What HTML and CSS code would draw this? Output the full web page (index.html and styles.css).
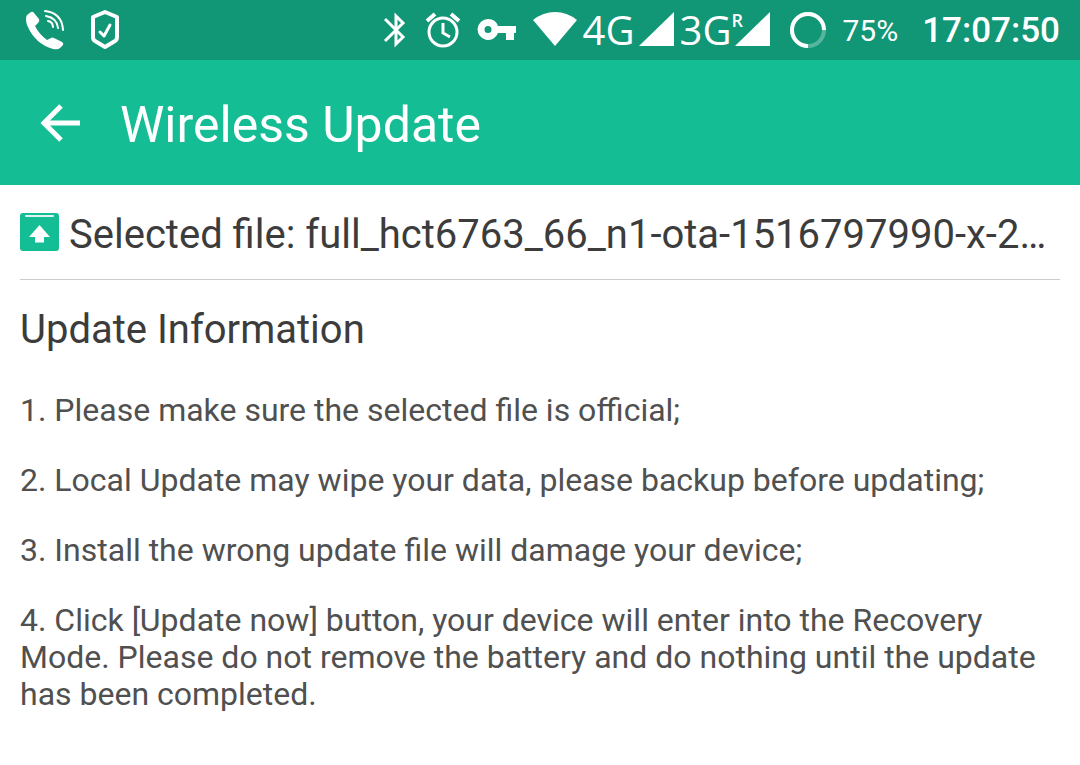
FILE: index.html
```html
<!DOCTYPE html>
<html lang="en">
  <head>
    <meta charset="UTF-8" />
    <meta name="viewport" content="width=device-width, initial-scale=1" />
    <title>Wireless Update</title>
    <link rel="stylesheet" href="styles.css" />
  </head>
  <body>
    <div class="status-bar">
      <div class="status-left">
        <svg width="40" height="42" viewBox="0 0 40 42">
          <path
            fill="#fff"
            d="M2 6 L6 3 Q8 2 9 4 L14 10 Q15 12 13 14 L10 17 Q14 25 22 31 L26 29 Q27 28 29 29 L37 33 Q39 34 38 36 L35 39 Q33 41 28 40 Q10 35 2 16 Q0 9 2 6z"
          />
          <path
            fill="none"
            stroke="#fff"
            stroke-width="2"
            stroke-linecap="round"
            d="M20 2 Q37 4 38 21 M21 7 Q32 9 33 19 M23 12 Q28 13 28 18"
          />
        </svg>
        <svg width="30" height="42" viewBox="0 0 30 42">
          <path
            fill="none"
            stroke="#fff"
            stroke-width="4"
            stroke-linejoin="round"
            d="M15 3 L27 8 V28 Q27 31 25 32 L15 38 L5 32 Q3 31 3 28 V8z"
          />
          <path
            fill="none"
            stroke="#fff"
            stroke-width="3"
            stroke-linecap="round"
            stroke-linejoin="round"
            d="M10 23 L14 27 L20 16"
          />
        </svg>
      </div>
      <div class="status-right">
        <svg width="24" height="36" viewBox="0 0 24 36">
          <path
            fill="none"
            stroke="#fff"
            stroke-width="3"
            d="M2 7 L20 25 L13 32 V4 L20 11 L2 29"
          />
        </svg>
        <svg class="alarm" width="36" height="36" viewBox="0 0 36 36">
          <circle cx="18" cy="20" r="14" fill="none" stroke="#fff" stroke-width="3" />
          <path
            fill="none"
            stroke="#fff"
            stroke-width="4"
            d="M2 9 L10 2 M26 2 L34 9"
          />
          <path fill="none" stroke="#fff" stroke-width="3" d="M18 11 V21 L25 25" />
        </svg>
        <svg class="key" width="40" height="24" viewBox="0 0 40 24">
          <path
            fill="#fff"
            fill-rule="evenodd"
            d="M11 1 A10.500 10.500 0 0 1 21 8 H39 V15 H37 V22 H29 V15 H21 A10.500 10.500 0 1 1 11 1z M11 8 A3.500 3.500 0 1 0 11 15 A3.500 3.500 0 1 0 11 8z"
          />
        </svg>
        <svg class="wifi" width="44" height="36" viewBox="0 0 44 36">
          <path fill="#fff" d="M0 8 Q10 0 22 0 Q34 0 44 8 L22 34z" />
        </svg>
        <span class="network">4G</span>
        <svg class="signal" width="35" height="36" viewBox="0 0 35 36">
          <path fill="#fff" d="M0 34 L35 0 V34z" />
        </svg>
        <span class="network">3G<sup>R</sup></span>
        <svg class="signal" width="35" height="36" viewBox="0 0 35 36">
          <path fill="#fff" d="M0 34 L35 0 V34z" />
        </svg>
        <svg class="battery" width="36" height="36" viewBox="0 0 36 36">
          <circle cx="18" cy="18" r="16" fill="none" stroke="#58b59d" stroke-width="4" />
          <path
            fill="none"
            stroke="#fff"
            stroke-width="4"
            d="M18 34 A16 16 0 1 1 34 18"
          />
        </svg>
        <span class="percent">75%</span>
        <span class="clock">17:07:50</span>
      </div>
    </div>

    <header class="app-bar">
      <button class="back" type="button" aria-label="Back">
        <svg width="40" height="40" viewBox="0 0 40 40">
          <path
            fill="none"
            stroke="#fff"
            stroke-width="5"
            d="M40 20 H3 M21 3 L4 20 L21 37"
          />
        </svg>
      </button>
      <h1>Wireless Update</h1>
    </header>

    <main class="content">
      <div class="file">
        <svg class="file-icon" width="39" height="38" viewBox="0 0 39 38">
          <rect width="39" height="38" rx="3" fill="#15bd94" />
          <path stroke="#dff6f0" stroke-width="2" stroke-linecap="round" d="M6 3 H33" />
          <path fill="#fff" d="M19.500 12 L30 24 H24 V29.500 H15 V24 H9z" />
        </svg>
        <span class="file-name">Selected file: full_hct6763_66_n1-ota-1516797990-x-2…</span>
      </div>

      <h2>Update Information</h2>
      <p>1. Please make sure the selected file is official;</p>
      <p>2. Local Update may wipe your data, please backup before updating;</p>
      <p>3. Install the wrong update file will damage your device;</p>
      <p>
        4. Click [Update now] button, your device will enter into the Recovery
        Mode. Please do not remove the battery and do nothing until the update
        has been completed.
      </p>
    </main>
  </body>
</html>
```
FILE: styles.css
```css
body {
  margin: 0;
  background-color: #fff;
  color: #3c3c3c;
  font-family: Roboto, sans-serif;
}

svg {
  display: block;
  flex: none;
}

/* Status bar */
.status-bar {
  display: flex;
  justify-content: space-between;
  align-items: center;
  height: 60px;
  padding: 0 20px 0 25px;
  background-color: #119676;
  color: #fff;
}

.status-left,
.status-right {
  display: flex;
  align-items: center;
}

.status-left {
  gap: 25px;
}

.alarm {
  margin-left: 18px;
}

.key {
  margin-left: 16px;
}

.wifi {
  margin-left: 16px;
}

.network {
  position: relative;
  margin-left: 6px;
  font-family: "Open Sans", sans-serif;
  font-size: 40px;
  line-height: 60px;
}

/* roaming mark over the corner of the network type */
.network sup {
  position: absolute;
  top: 10px;
  left: 100%;
  font-size: 18px;
  font-weight: 600;
  line-height: 20px;
}

.signal {
  margin-left: 4px;
}

.battery {
  margin-left: 20px;
}

.percent {
  margin-left: 16px;
  font-size: 30px;
}

.clock {
  margin-left: 24px;
  font-size: 35px;
  font-weight: 500;
}

/* App bar */
.app-bar {
  display: flex;
  align-items: center;
  gap: 40px;
  height: 125px;
  padding: 0 40px;
  background-color: #15bd94;
  color: #fff;
}

.back {
  padding: 0;
  border: none;
  background: none;
  cursor: pointer;
}

h1 {
  margin: 0;
  padding-top: 4px;
  font-size: 50px;
  font-weight: 400;
}

/* Content */
.content {
  padding: 0 20px 50px;
}

.file {
  display: flex;
  align-items: center;
  gap: 10px;
  height: 94px;
  border-bottom: 1px solid #ccc;
}

.file-name {
  padding-top: 4px;
  overflow: hidden;
  font-size: 40px;
  white-space: nowrap;
  text-overflow: ellipsis;
}

h2 {
  margin: 26px 0 39px;
  font-size: 40px;
  font-weight: 400;
  line-height: 47px;
}

p {
  margin: 0 0 33px;
  color: #505050;
  font-size: 32px;
  line-height: 37px;
}
```
